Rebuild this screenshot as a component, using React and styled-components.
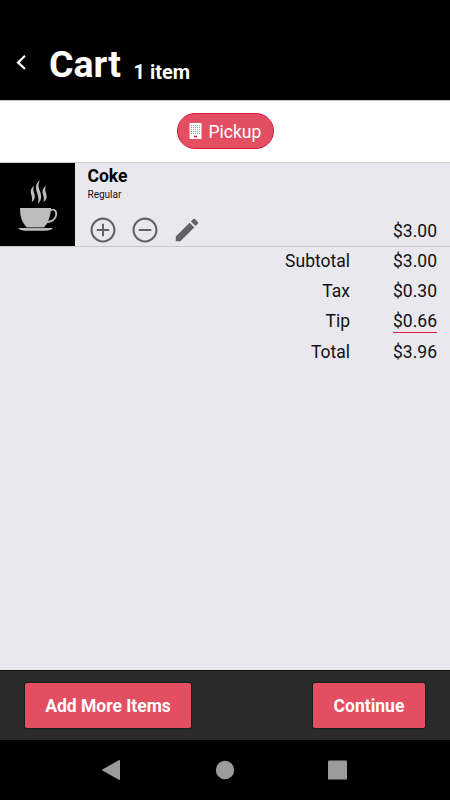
import React from 'react';
import styled, { createGlobalStyle } from 'styled-components';

const GlobalStyle = createGlobalStyle`
	* {
		box-sizing: border-box;
	}

	body {
		margin: 0;
		background: #000;
		font-family: Roboto, sans-serif;
		color: #111;
	}

	button {
		margin: 0;
		padding: 0;
		border: 0;
		background: none;
		color: inherit;
		font-family: inherit;
	}

	svg {
		display: block;
	}
`;

const Screen = styled.div`
	display: flex;
	flex-direction: column;
	width: 450px;
	height: 800px;
	overflow: hidden;
	background: #e9e8ee;
`;

const Header = styled.header`
	display: flex;
	align-items: flex-start;
	height: 100px;
	flex-shrink: 0;
	padding: 42px 0 0 15px;
	background: #000;
	color: #fff;
`;

const BackButton = styled.button`
	width: 34px;
	padding-top: 12px;
`;

const Title = styled.h1`
	margin: 0;
	font-size: 37.5px;
	font-weight: 700;
	line-height: 45px;
`;

const ItemCount = styled.span`
	margin: 18px 0 0 12.5px;
	font-size: 20px;
	font-weight: 700;
	line-height: 24px;
`;

const OrderType = styled.div`
	display: flex;
	flex-shrink: 0;
	justify-content: center;
	align-items: flex-start;
	height: 63px;
	padding-top: 12px;
	border-top: 1px solid #c6c5c9;
	border-bottom: 1px solid #ceced1;
	background: #fff;
`;

const Pill = styled.button`
	display: flex;
	align-items: center;
	width: 97px;
	height: 36px;
	padding-left: 11px;
	border: 1px solid #e0143c;
	border-radius: 18px;
	background: #e44e62;
	color: #fff;
	font-size: 17.5px;

	span {
		margin: 1px 0 0 7px;
	}
`;

const CartItem = styled.section`
	display: flex;
	flex-shrink: 0;
	height: 84px;
	border-bottom: 1px solid #c9c8cd;
`;

const Thumbnail = styled.div`
	width: 75px;
	height: 83px;
	background: #000;
`;

const ItemDetails = styled.div`
	flex: 1;
	padding: 3px 0 0 12.5px;
`;

const ItemName = styled.div`
	color: #000;
	font-size: 17.5px;
	font-weight: 700;
	line-height: 21px;
`;

const ItemOption = styled.div`
	font-size: 10px;
	line-height: 16px;
`;

const Actions = styled.div`
	display: flex;
	gap: 12.3px;
	margin: 11.5px 0 0 0;
	color: #626265;
`;

const ItemPrice = styled.div`
	align-self: flex-end;
	padding: 0 13px 4px 0;
	font-size: 17.5px;
	line-height: 22px;
`;

const Totals = styled.dl`
	display: grid;
	grid-template-columns: 1fr 87px;
	grid-template-rows: 30px 30px 31px 30px;
	flex: 1;
	margin: 0;
	padding: 1px 13px 0 0;
	align-content: start;
	justify-items: end;
	font-size: 17.5px;
	line-height: 27px;
`;

const Label = styled.dt`
	margin: 0;
`;

const Amount = styled.dd`
	align-self: start;
	height: ${props => (props.$editable ? '25px' : 'auto')};
	margin: 0;
	border-bottom: ${props => (props.$editable ? '1px solid #e8173f' : '0')};
`;

const Footer = styled.footer`
	display: flex;
	flex-shrink: 0;
	justify-content: space-between;
	height: 70px;
	padding: 11.5px 25px 0;
	border-top: 1px solid #0c0c0c;
	background: #2a2a2a;
`;

const ActionButton = styled.button`
	width: ${props => props.$width}px;
	height: 45px;
	border-radius: 2px;
	background: #e44e62;
	box-shadow: 0 0 1px 1px #14201f;
	color: #fff;
	font-size: 17.5px;
	font-weight: 700;
	line-height: 47px;
`;

const SystemBar = styled.nav`
	display: flex;
	flex-shrink: 0;
	justify-content: center;
	align-items: center;
	gap: 93px;
	height: 60px;
	background: #000;
	color: #9b9b9b;
`;

const PLUS = 'M12.8 7h-1.6v4.2H7v1.6h4.2V17h1.6v-4.2H17v-1.6h-4.2z';
const MINUS = 'M7 11.2v1.6h10v-1.6z';
const RING =
	'M12 2C6.48 2 2 6.48 2 12s4.48 10 10 10 10-4.48 10-10S17.52 2 12 2zm0 18.3c-4.58 0-8.3-3.72-8.3-8.3S7.42 3.7 12 3.7s8.3 3.72 8.3 8.3-3.72 8.3-8.3 8.3z';
const PENCIL =
	'M3 17.25V21h3.75L17.81 9.94l-3.75-3.75L3 17.25zM20.71 7.04a1 1 0 0 0 0-1.41l-2.34-2.34a1 1 0 0 0-1.41 0l-1.83 1.83 3.75 3.75 1.83-1.83z';

const ActionIcon = ({ label, d }) => (
	<button type="button" aria-label={label}>
		<svg width="30" height="30" viewBox="0 0 24 24" fill="currentColor">
			<path d={d} />
		</svg>
	</button>
);

const BackIcon = () => (
	<svg width="12" height="16" viewBox="0 0 12 16" fill="none" stroke="#fff" strokeWidth="2.2">
		<path d="M10 1.8L3 8.4l7 6.6" />
	</svg>
);

const BuildingIcon = () => (
	<svg width="13" height="17" viewBox="0 0 13 17">
		<path fill="#fff" d="M.5 0h12v16H.5z" />
		<path
			stroke="#e44e62"
			strokeWidth="1"
			strokeDasharray="1 1"
			d="M2 2.5h9M2 4.5h9M2 6.5h9M2 8.5h9M2 10.5h9"
			opacity="0.75"
		/>
		<path fill="#e0143c" d="M5 12.7h3v1.6H5z" />
	</svg>
);

const CupIcon = () => (
	<svg width="75" height="83" viewBox="0 0 75 83">
		<g fill="#bdbdbd">
			<path d="M20 45h31v1.5c3-1.3 6.3.1 6.2 4.2-.2 5.5-4.7 9-9.8 9.2L44 64.3H26.8c-4.7-4.4-6.8-10.8-6.8-19.3zm30.7 3.2c-.4 3.8-1.2 6.8-2.6 9.5 4-.4 7-2.8 7.2-6.8.1-3.2-2-4.1-4.6-2.7z" />
			<path d="M18 65.1h35c-1.8 1.9-4.2 2.7-7.5 2.7H25.4c-3.3 0-5.8-.8-7.4-2.7z" />
			<path d="M39.9 17c-2.4 4.5-1.1 8 .2 11.6 1.7 4.8 1.6 9-2.3 12.7 1.3-4.6.6-7.6-.9-11.9-1.7-5-1.1-9 3-12.4zM34 23.1c-1.1 3.2-.5 5.1.3 7.4 1.1 3.4.6 6.2-2.6 8.6.8-3.1.3-5-.5-7.8-.9-3.1-.4-6 2.8-8.2zM45.8 23.1c-1.1 3.2-.5 5.1.3 7.4 1.1 3.4.6 6.2-2.6 8.6.8-3.1.3-5-.5-7.8-.9-3.1-.4-6 2.8-8.2z" />
		</g>
		<path stroke="#707070" strokeWidth="0.8" d="M26 64.8h19" />
	</svg>
);

const totals = [
	{ label: 'Subtotal', amount: '$3.00' },
	{ label: 'Tax', amount: '$0.30' },
	{ label: 'Tip', amount: '$0.66', editable: true },
	{ label: 'Total', amount: '$3.96' }
];

export default function App() {
	return (
		<Screen>
			<GlobalStyle />
			<Header>
				<BackButton type="button" aria-label="Back">
					<BackIcon />
				</BackButton>
				<Title>Cart</Title>
				<ItemCount>1 item</ItemCount>
			</Header>
			<OrderType>
				<Pill type="button">
					<BuildingIcon />
					<span>Pickup</span>
				</Pill>
			</OrderType>
			<CartItem>
				<Thumbnail>
					<CupIcon />
				</Thumbnail>
				<ItemDetails>
					<ItemName>Coke</ItemName>
					<ItemOption>Regular</ItemOption>
					<Actions>
						<ActionIcon label="Add one" d={RING + PLUS} />
						<ActionIcon label="Remove one" d={RING + MINUS} />
						<ActionIcon label="Edit" d={PENCIL} />
					</Actions>
				</ItemDetails>
				<ItemPrice>$3.00</ItemPrice>
			</CartItem>
			<Totals>
				{totals.map(({ label, amount, editable }) => (
					<React.Fragment key={label}>
						<Label>{label}</Label>
						<Amount $editable={editable}>{amount}</Amount>
					</React.Fragment>
				))}
			</Totals>
			<Footer>
				<ActionButton type="button" $width={166}>
					Add More Items
				</ActionButton>
				<ActionButton type="button" $width={112}>
					Continue
				</ActionButton>
			</Footer>
			<SystemBar>
				<svg width="20" height="20" viewBox="0 0 20 20" fill="currentColor">
					<path d="M16.8.3Q18 -.3 18 1v18q0 1.3-1.2.7L.7 10.8q-1.2-.8 0-1.6z" />
				</svg>
				<svg width="20" height="20" viewBox="0 0 20 20" fill="currentColor">
					<circle cx="10" cy="10" r="9.2" />
				</svg>
				<svg width="20" height="20" viewBox="0 0 20 20" fill="currentColor">
					<rect x="0" y="0.4" width="19" height="19.2" rx="1.2" />
				</svg>
			</SystemBar>
		</Screen>
	);
}
